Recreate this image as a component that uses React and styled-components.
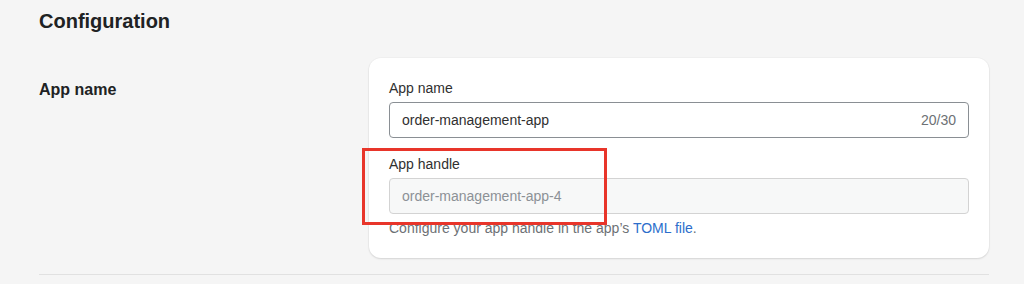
import React from "react";
import styled, { createGlobalStyle } from "styled-components";

const GlobalStyle = createGlobalStyle`
  body {
    margin: 0;
    background: #f5f5f5;
    font-family: "Liberation Sans", Arial, sans-serif;
    color: #303030;
  }
`;

const Page = styled.div`
  padding: 9px 35px 0 39px;
  height: 284px;
  box-sizing: border-box;
  overflow: hidden;
`;

const Title = styled.h2`
  margin: 0;
  font-size: 20px;
  line-height: 24px;
  font-weight: 700;
  color: #202223;
`;

const Section = styled.div`
  display: grid;
  grid-template-columns: 330px 620px;
  margin-top: 25px;
  padding-bottom: 16px;
  border-bottom: 1px solid #e1e1e1;
`;

const SectionTitle = styled.h3`
  margin: 0;
  padding-top: 20px;
  font-size: 16px;
  line-height: 24px;
  font-weight: 700;
  color: #202223;
`;

const Card = styled.div`
  position: relative;
  background: #fff;
  border-radius: 12px;
  padding: 20px;
  box-shadow: 0 1px 2px rgba(0, 0, 0, 0.12), 0 0 0 1px rgba(0, 0, 0, 0.02);
  display: flex;
  flex-direction: column;
  gap: 16px;
`;

const Field = styled.div`
  display: flex;
  flex-direction: column;
`;

const Label = styled.label`
  font-size: 14px;
  line-height: 20px;
  margin-bottom: 4px;
  color: #303030;
`;

const InputBox = styled.div`
  display: flex;
  align-items: center;
  height: 36px;
  box-sizing: border-box;
  padding: 0 12px;
  border: 1px solid ${(p) => (p.disabled ? "#d3d3d3" : "#8a8f94")};
  border-radius: 4px;
  background: ${(p) => (p.disabled ? "#f7f8f8" : "#fff")};
  font-size: 14px;
  color: ${(p) => (p.disabled ? "#8c9196" : "#303030")};
`;

const Value = styled.span`
  flex: 1;
`;

const Counter = styled.span`
  color: #6d7175;
`;

const Help = styled.p`
  margin: 4px 0 0;
  font-size: 14px;
  line-height: 20px;
  color: #6d7175;
`;

const Link = styled.a`
  color: #2c6ecb;
  text-decoration: none;
`;

const Highlight = styled.div`
  position: absolute;
  left: -7px;
  top: 90px;
  width: 245px;
  height: 77px;
  box-sizing: border-box;
  border: 3px solid #e8352a;
  pointer-events: none;
`;

export default function App() {
  return (
    <>
      <GlobalStyle />
      <Page>
        <Title>Configuration</Title>
        <Section>
          <SectionTitle>App name</SectionTitle>
          <Card>
            <Field>
              <Label>App name</Label>
              <InputBox>
                <Value>order-management-app</Value>
                <Counter>20/30</Counter>
              </InputBox>
            </Field>
            <Field>
              <Label>App handle</Label>
              <InputBox disabled>
                <Value>order-management-app-4</Value>
              </InputBox>
              <Help>
                Configure your app handle in the app’s <Link href="#">TOML file</Link>.
              </Help>
            </Field>
            <Highlight />
          </Card>
        </Section>
      </Page>
    </>
  );
}
